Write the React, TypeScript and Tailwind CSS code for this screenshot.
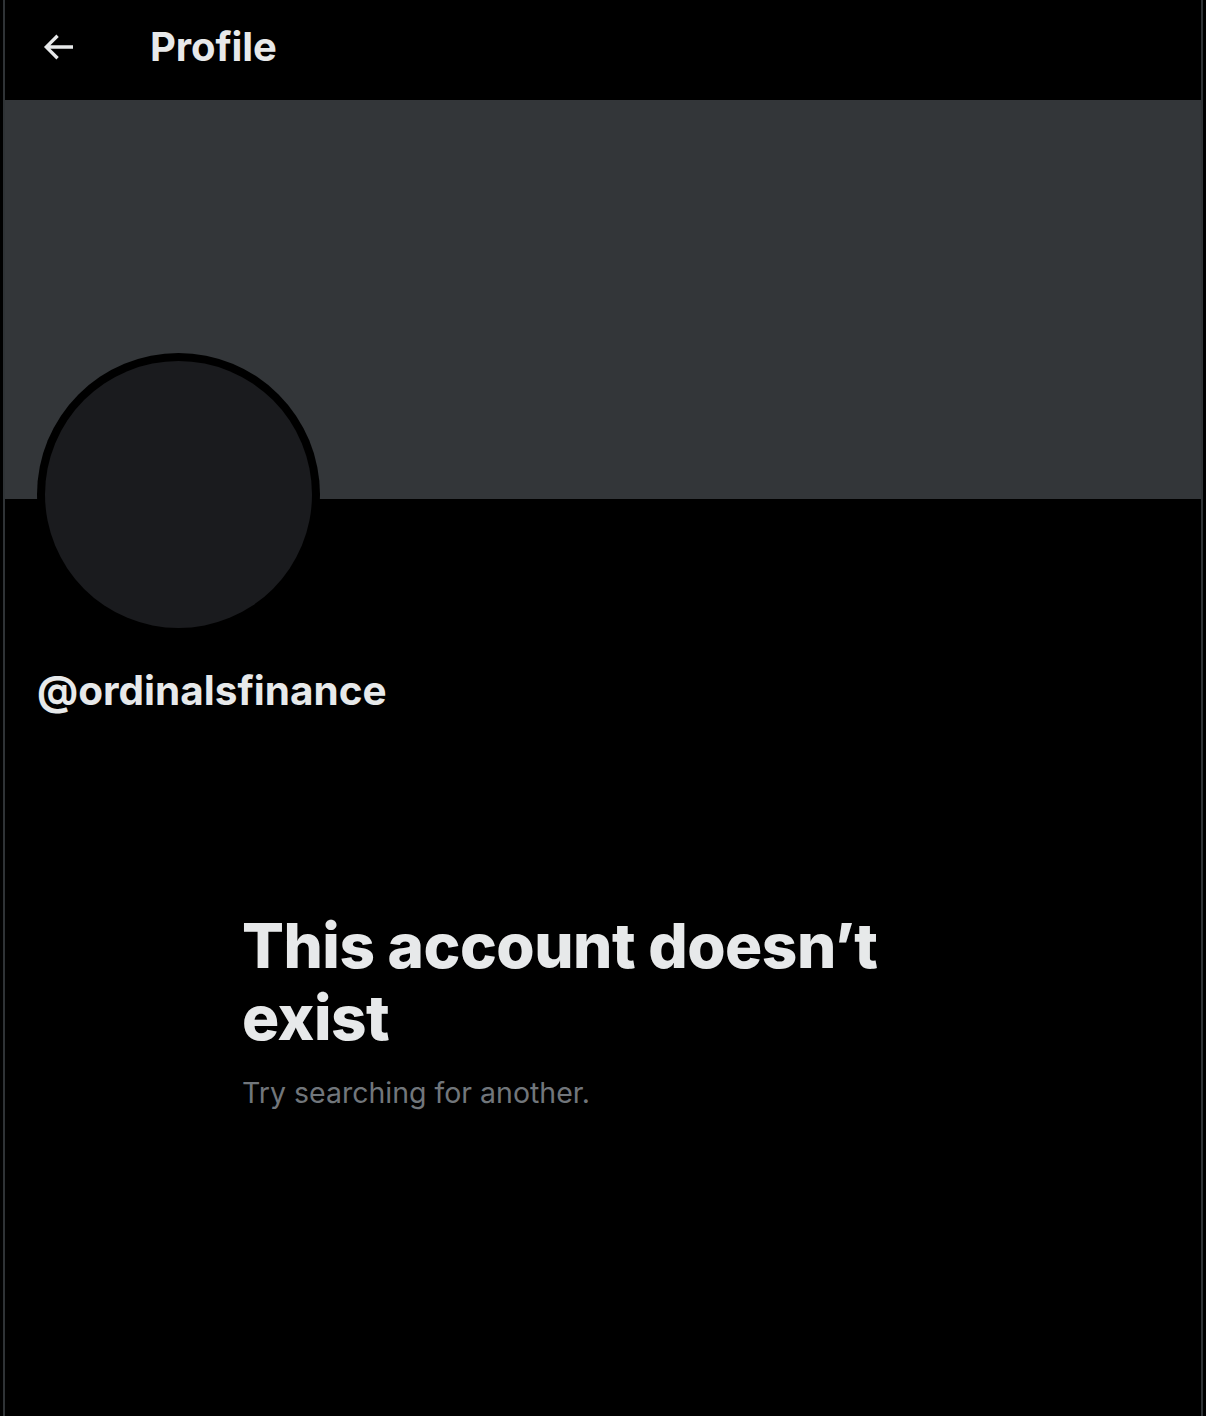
export default function App() {
  return (
    <div className="min-h-screen bg-black font-['Inter','Noto_Sans',sans-serif] text-[#e7e9ea]">
      <div className="ml-[3px] flex min-h-[1416px] w-[1200px] flex-col border-x-2 border-[#2f3336]">
        <header className="flex h-[100px] items-center pb-[6px]">
          <button className="ml-[33px] flex h-[40px] w-[40px] items-center justify-center">
            <svg width="40" height="40" viewBox="0 0 24 24" fill="#e7e9ea">
              <path d="M7.414 13l5.043 5.04-1.414 1.42L3.586 12l7.457-7.46 1.414 1.42L7.414 11H21v2H7.414z" />
            </svg>
          </button>
          <h1 className="ml-[72px] text-[40px] font-bold leading-[48px] tracking-[-0.1px]">Profile</h1>
        </header>

        <div className="h-[399px] bg-[#333639]" />

        <div className="px-[32px]">
          <div className="-mt-[146px] h-[283px] w-[283px] rounded-full bg-black p-[8px]">
            <div className="h-full w-full rounded-full bg-[#1a1b1e]" />
          </div>
          <div className="mt-[31px] text-[40.5px] font-bold leading-[48px]">@ordinalsfinance</div>
        </div>

        <div className="mt-[195px] pl-[237px]">
          <div className="max-w-[680px]">
            <h2 className="text-[62px] font-extrabold leading-[72px] tracking-[-0.5px]">
              This account doesn’t exist
            </h2>
            <p className="mt-[19px] text-[28.5px] leading-[40px] text-[#71767b]">Try searching for another.</p>
          </div>
        </div>
      </div>
    </div>
  );
}
